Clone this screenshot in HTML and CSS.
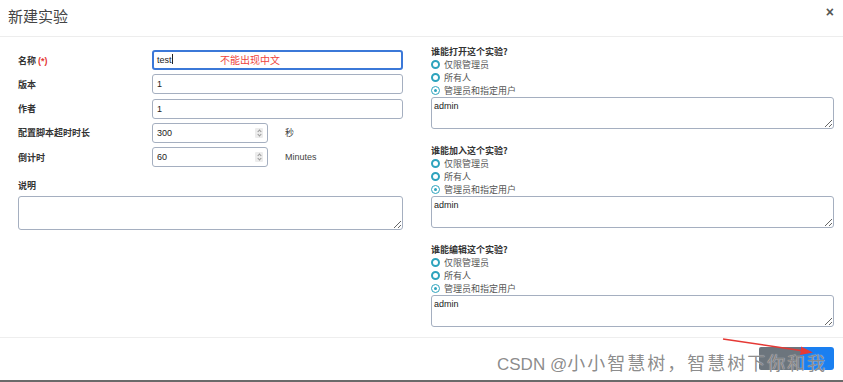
FILE: index.html
```html
<!DOCTYPE html>
<html lang="zh">
<head>
<meta charset="utf-8">
<title>新建实验</title>
<link rel="stylesheet" href="styles.css">
</head>
<body>
<div class="modal">
  <div class="modal-header">
    <h4 class="modal-title">新建实验</h4>
    <span class="close">×</span>
  </div>
  <div class="modal-body">
    <div class="col-left">
      <div class="row">
        <label class="lbl">名称 <span class="req">(*)</span></label>
        <div class="field">
          <div class="input focused">test<span class="caret"></span></div>
          <span class="hint">不能出现中文</span>
        </div>
      </div>
      <div class="row">
        <label class="lbl">版本</label>
        <div class="field"><div class="input">1</div></div>
      </div>
      <div class="row">
        <label class="lbl">作者</label>
        <div class="field"><div class="input">1</div></div>
      </div>
      <div class="row">
        <label class="lbl">配置脚本超时时长</label>
        <div class="field num">
          <div class="input">300</div>
          <span class="spin"><i class="up"></i><i class="down"></i></span>
        </div>
        <span class="unit">秒</span>
      </div>
      <div class="row">
        <label class="lbl">倒计时</label>
        <div class="field num">
          <div class="input">60</div>
          <span class="spin"><i class="up"></i><i class="down"></i></span>
        </div>
        <span class="unit">Minutes</span>
      </div>
      <div class="desc-label lbl">说明</div>
      <textarea class="ta desc"></textarea>
    </div>
    <div class="col-right">
      <div class="group">
        <div class="q lbl">谁能打开这个实验?</div>
        <div class="radio"><span class="dot"></span>仅限管理员</div>
        <div class="radio"><span class="dot"></span>所有人</div>
        <div class="radio"><span class="dot on"></span>管理员和指定用户</div>
        <textarea class="ta">admin</textarea>
      </div>
      <div class="group">
        <div class="q lbl">谁能加入这个实验?</div>
        <div class="radio"><span class="dot"></span>仅限管理员</div>
        <div class="radio"><span class="dot"></span>所有人</div>
        <div class="radio"><span class="dot on"></span>管理员和指定用户</div>
        <textarea class="ta">admin</textarea>
      </div>
      <div class="group">
        <div class="q lbl">谁能编辑这个实验?</div>
        <div class="radio"><span class="dot"></span>仅限管理员</div>
        <div class="radio"><span class="dot"></span>所有人</div>
        <div class="radio"><span class="dot on"></span>管理员和指定用户</div>
        <textarea class="ta">admin</textarea>
      </div>
    </div>
  </div>
  <div class="modal-footer">
    <button class="btn btn-gray"></button>
    <button class="btn btn-blue"></button>
  </div>
</div>
<div class="bottom-bar"></div>
<svg class="arrow" width="843" height="382" viewBox="0 0 843 382">
  <line x1="723" y1="339" x2="804" y2="351" stroke="#e53935" stroke-width="1.5"/>
  <polygon points="813,352.5 801,346.5 800,355" fill="#e53935"/>
</svg>
<div class="watermark">CSDN @<span class="wm-cjk">小小智慧树，智慧树下你和我</span></div>
</body>
</html>
```

FILE: styles.css
```css
* { box-sizing: border-box; }
html, body { margin: 0; padding: 0; }
body {
  width: 843px;
  height: 382px;
  background: #fff;
  font-family: "Liberation Sans", "Noto Sans CJK SC", sans-serif;
  color: #333;
  overflow: hidden;
  position: relative;
}
.modal {
  height: 380px;
  display: flex;
  flex-direction: column;
}
.modal-header {
  flex: none;
  height: 37px;
  border-bottom: 1px solid #ededed;
  display: flex;
  justify-content: space-between;
  align-items: flex-start;
  padding: 6px 9px 0 8px;
}
.modal-title {
  margin: 0;
  font-family: "Noto Sans CJK SC", sans-serif;
  font-weight: normal;
  font-size: 15px;
  line-height: 20px;
  color: #444;
}
.close {
  font-size: 14px;
  font-weight: bold;
  line-height: 12px;
  color: #555;
  margin-top: 0;
}
.modal-body {
  flex: 1;
  min-height: 0;
  display: flex;
  padding: 9px 9px 0 18px;
}
.col-left {
  width: 385px;
  padding-top: 4px;
}
.col-right {
  width: 403px;
  margin-left: 28px;
}
.lbl {
  font-family: "Noto Sans CJK SC", sans-serif;
  font-weight: bold;
  font-size: 9px;
  color: #333;
}
.req { color: #e53935; font-family: "Liberation Sans", sans-serif; }
.row {
  display: flex;
  align-items: center;
  height: 20px;
  margin-bottom: 4.3px;
}
.row .lbl { width: 134px; }
.field {
  position: relative;
  width: 251px;
  height: 20px;
}
.field.num { width: 116px; }
.input {
  height: 20px;
  border: 1px solid #a5afc0;
  border-radius: 3px;
  font-size: 9px;
  line-height: 18px;
  padding-left: 4px;
  color: #222;
  background: #fff;
}
.input.focused {
  border: 2px solid #3b78d8;
  line-height: 16px;
  padding-left: 3px;
}
.caret {
  display: inline-block;
  width: 1px;
  height: 10px;
  background: #222;
  vertical-align: -1px;
}
.hint {
  position: absolute;
  left: 68px;
  top: 4px;
  font-family: "Noto Sans CJK SC", sans-serif;
  font-size: 10px;
  line-height: 12px;
  color: #f0443c;
}
.spin {
  position: absolute;
  left: 103px;
  top: 5px;
  width: 8px;
  height: 10px;
  background: #ececec;
  border-radius: 1px;
}
.spin i {
  position: absolute;
  left: 2.5px;
  width: 3px;
  height: 3px;
  border-left: 1px solid #999;
  border-top: 1px solid #999;
}
.spin .up { top: 2px; transform: rotate(45deg); }
.spin .down { top: 5px; transform: rotate(225deg); }
.unit {
  margin-left: 17px;
  font-size: 9px;
  color: #444;
  font-family: "Liberation Sans", "Noto Sans CJK SC", sans-serif;
}
.desc-label {
  margin-top: 13px;
  line-height: 12px;
  height: 12px;
}
.ta {
  display: block;
  width: 403px;
  height: 32px;
  margin: 0;
  border: 1px solid #a5afc0;
  border-radius: 3px;
  font-family: "Liberation Sans", sans-serif;
  font-size: 9px;
  color: #222;
  padding: 3px 2px;
  background: #fff;
  resize: both;
}
.ta.desc {
  width: 385px;
  height: 34px;
  margin-top: 4px;
}
.group { margin-bottom: 16px; }
.q { line-height: 12px; height: 12px; }
.radio {
  display: flex;
  align-items: center;
  height: 13px;
  font-family: "Noto Sans CJK SC", sans-serif;
  font-size: 9px;
  color: #555;
}
.dot {
  width: 9px;
  height: 9px;
  border: 2px solid #2ea3bd;
  border-radius: 50%;
  margin-right: 4px;
  position: relative;
  flex: none;
}
.dot.on { border-width: 1px; }
.dot.on::after {
  content: "";
  position: absolute;
  left: 2px;
  top: 2px;
  width: 3px;
  height: 3px;
  border-radius: 50%;
  background: #2ea3bd;
}
.modal-footer {
  flex: none;
  height: 43px;
  border-top: 1px solid #eeeeee;
  display: flex;
  justify-content: flex-end;
  align-items: flex-start;
  padding: 9px 9px 0 0;
}
.btn {
  height: 23px;
  border: none;
  margin: 0;
  padding: 0;
}
.btn-gray {
  width: 41px;
  background: #6c757d;
  border-radius: 2px 0 0 2px;
}
.btn-blue {
  width: 34px;
  background: #1a7ff0;
  border-radius: 0 3px 3px 0;
}
.bottom-bar {
  height: 2px;
  background: #6a6a6a;
}
.arrow {
  position: absolute;
  left: 0;
  top: 0;
  pointer-events: none;
}
.watermark {
  position: absolute;
  left: 497px;
  top: 350px;
  font-family: "Liberation Sans", "Noto Sans CJK SC", sans-serif;
  font-size: 17px;
  line-height: 24px;
  color: rgba(125, 125, 125, 0.9);
  text-shadow: 0 0 1px rgba(255,255,255,0.9);
  white-space: nowrap;
}
.wm-cjk {
  font-family: "Noto Sans CJK SC", sans-serif;
  font-size: 18px;
  letter-spacing: 2px;
}
```
